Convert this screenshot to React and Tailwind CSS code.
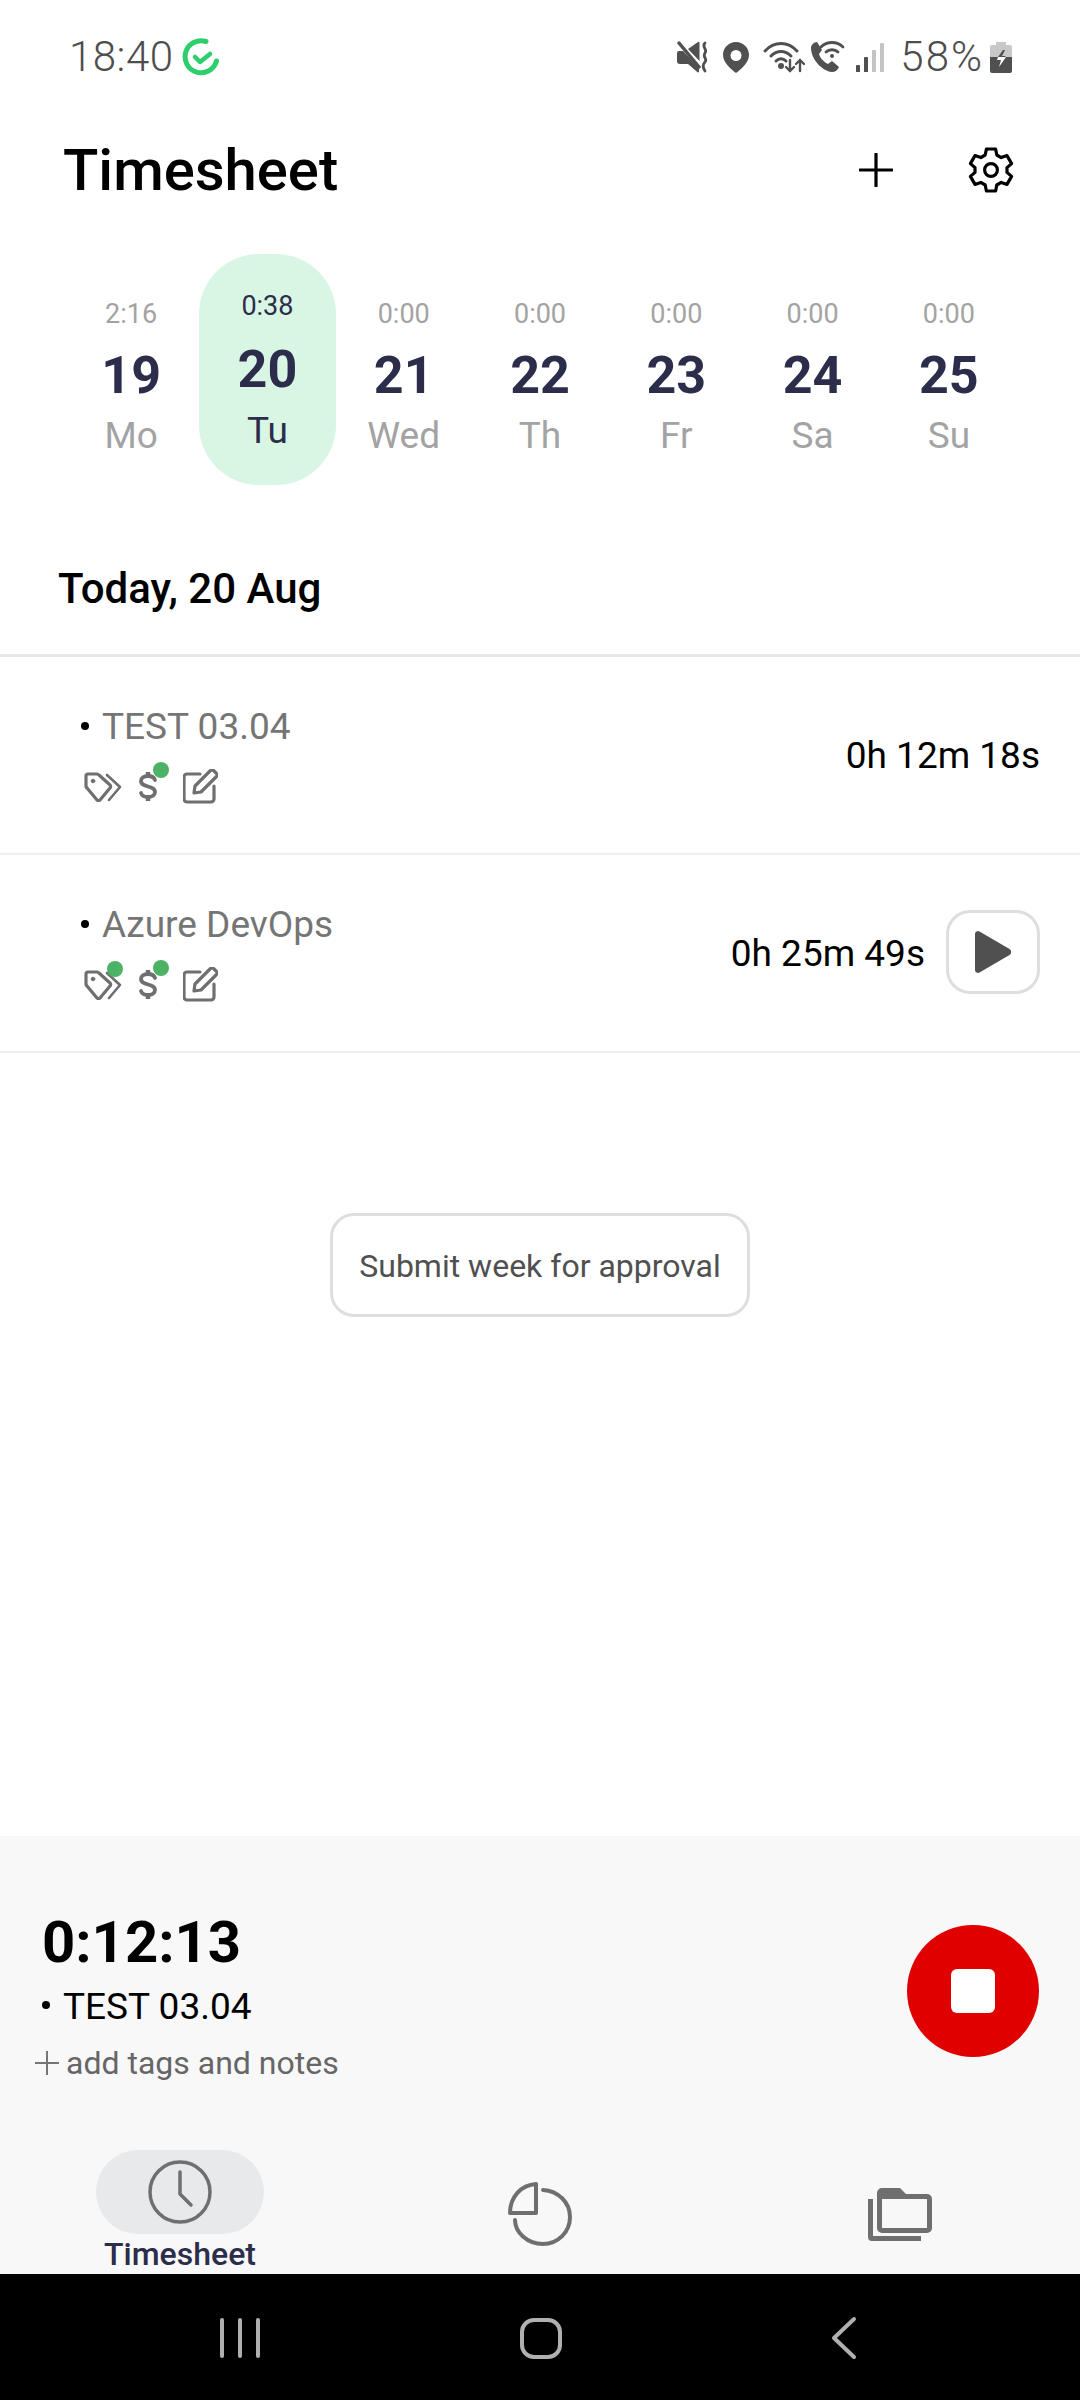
const DAYS = [
  { time: '2:16', num: '19', label: 'Mo' },
  { time: '0:38', num: '20', label: 'Tu', active: true },
  { time: '0:00', num: '21', label: 'Wed' },
  { time: '0:00', num: '22', label: 'Th' },
  { time: '0:00', num: '23', label: 'Fr' },
  { time: '0:00', num: '24', label: 'Sa' },
  { time: '0:00', num: '25', label: 'Su' },
]

function StatusIcons() {
  return (
    <div className="flex items-center">
      {/* mute */}
      <svg width="32" height="32" viewBox="0 0 32 32" className="mr-[14px]">
        <path fill="#505050" d="M0 12a2 2 0 0 1 2-2h4l16 17v3a1 1 0 0 1-2 .700L11 23H3a3 3 0 0 1-3-3z" />
        <path fill="#505050" d="M11 8l10-7a1 1 0 0 1 1.500 1v18z" />
        <path d="M2 2l20 24" stroke="#505050" strokeWidth="3.500" strokeLinecap="round" />
        <path d="M28 2c-4 4 3 6 0 10s3 6 0 9-2 6 0 9" fill="none" stroke="#505050" strokeWidth="2.800" strokeLinecap="round" />
      </svg>
      {/* location */}
      <svg width="26" height="31" viewBox="0 0 26 31" className="mr-[14px]">
        <path fillRule="evenodd" fill="#505050" d="M13 0c7 0 13 5.500 13 13 0 7-7 13.500-13 18C7 26.500 0 20 0 13 0 5.500 6 0 13 0zm0 8a5.500 5.500 0 1 0 0 11 5.500 5.500 0 0 0 0-11z" />
      </svg>
      {/* wifi with arrows */}
      <svg width="44" height="32" viewBox="0 0 44 32" className="mr-[3px]" fill="none" stroke="#505050" strokeWidth="3" strokeLinecap="round">
        <path d="M2 10C11 0 25 0 34 10" />
        <path d="M8 15c6-6 14-6 20 0" />
        <path d="M13 20c3-3 7-3 10 0" />
        <circle cx="18" cy="25" r="1.500" fill="#505050" />
        <path d="M27 19v11M23 26l4 4 4-4M37 30V19M33 23l4-4 4 4" strokeWidth="2.400" />
      </svg>
      {/* wifi call */}
      <svg width="35" height="32" viewBox="0 0 35 32" className="mr-[11px]">
        <path fill="#505050" d="M7 1l5 8-3 4c1 4 5 8 9 10l4-3 7 6c-1 3-4 5-7 5C12 30 1 18 1 7c0-3 3-6 6-6z" />
        <path d="M11 6c6-6 16-6 22 0M16 11c3-3 9-3 12 0" fill="none" stroke="#505050" strokeWidth="2.800" strokeLinecap="round" />
        <circle cx="22" cy="15" r="2" fill="#505050" />
      </svg>
      {/* signal */}
      <div className="flex items-end gap-[4px] h-[30px] mr-[16px]">
        <div className="w-[4px] h-[7px] bg-[#505050] rounded-t-[1px]" />
        <div className="w-[4px] h-[15px] bg-[#505050] rounded-t-[1px]" />
        <div className="w-[4px] h-[22px] bg-[#c4c4c4] rounded-t-[1px]" />
        <div className="w-[4px] h-[29px] bg-[#c4c4c4] rounded-t-[1px]" />
      </div>
      <span className="text-[42px] leading-none font-light text-[#4d4d4d] tracking-[2px]">58%</span>
      {/* battery */}
      <svg width="22" height="31" viewBox="0 0 22 31" className="ml-[6px]">
        <path fill="#c8c8c8" d="M6 0h10v3h4a2 2 0 0 1 2 2v10H0V5a2 2 0 0 1 2-2h4z" />
        <path fill="#505050" d="M0 15h22v14a2 2 0 0 1-2 2H2a2 2 0 0 1-2-2z" />
        <path fill="#505050" d="M13 8l-5 7h7l1-1h-4l3-6z" />
        <path fill="#fff" d="M8 15l-1 3h4l-2 7 7-10z" />
      </svg>
    </div>
  )
}

function TagIcon() {
  return (
    <svg width="38" height="30" viewBox="0 0 38 30" fill="none" stroke="#6f6f6f" strokeWidth="3.200" strokeLinejoin="round" strokeLinecap="round">
      <path d="M2 4a2 2 0 0 1 2-2h9a3 3 0 0 1 2 1l11 10a2 2 0 0 1 0 3l-10 12a2 2 0 0 1-3 0L3 16a3 3 0 0 1-1-2z" />
      <circle cx="9" cy="9" r="1.800" fill="#6f6f6f" strokeWidth="1" />
      <path d="M23 3l13 12-11 13" strokeWidth="2.600" />
    </svg>
  )
}

function DollarIcon() {
  return (
    <svg width="20" height="33" viewBox="0 0 20 33" fill="none" stroke="#6f6f6f" strokeWidth="3.800" strokeLinecap="round">
      <path d="M17 10c-1-3-4-4-7-4-4 0-7 2-7 5 0 7 14 4 14 11 0 3-3 5-7 5-3 0-6-1-7-4" />
      <path d="M10 2v4M10 27v4" strokeLinecap="butt" strokeWidth="4.500" />
    </svg>
  )
}

function EditIcon() {
  return (
    <svg width="35" height="35" viewBox="0 0 35 35" fill="none" stroke="#6f6f6f" strokeWidth="3.200" strokeLinecap="round" strokeLinejoin="round">
      <path d="M17 5H4a3 3 0 0 0-3 3v22a3 3 0 0 0 3 3h24a3 3 0 0 0 3-3V17" />
      <path d="M11 24l1-7L27 2a2.500 2.500 0 0 1 4 0l2 2a2.500 2.500 0 0 1 0 4L18 23z" />
    </svg>
  )
}

function GreenDot({ className }) {
  return <span className={`absolute w-[16px] h-[16px] rounded-full bg-[#4cb266] ${className}`} />
}

function EntryRow({ name, duration, tagDot, play }) {
  return (
    <div className="h-[198px] border-b-2 border-[#f0f0f0] flex items-center justify-between pl-[81px] pr-[40px]">
      <div className="pb-[1px]">
        <div className="flex items-center h-[44px]">
          <span className="w-[8px] h-[8px] rounded-full bg-black mr-[13px] mb-[2px]" />
          <span className="text-[37px] leading-none text-[#757575]">{name}</span>
        </div>
        <div className="flex items-center mt-[20px] h-[36px] pl-[3px]">
          <div className="relative">
            <TagIcon />
            {tagDot && <GreenDot className="right-[-1px] top-[-9px]" />}
          </div>
          <div className="relative ml-[16px]">
            <DollarIcon />
            <GreenDot className="left-[15px] top-[-8px]" />
          </div>
          <div className="ml-[25px]">
            <EditIcon />
          </div>
        </div>
      </div>
      <div className="flex items-center">
        <span className="text-[37px] leading-none text-black mt-[1px]">{duration}</span>
        {play && (
          <div className="ml-[21px] w-[94px] h-[84px] -mt-[2px] border-[3px] border-[#dedede] rounded-[24px] flex items-center justify-center">
            <svg width="38" height="44" viewBox="0 0 38 44" fill="#505050">
              <path d="M1 4a3 3 0 0 1 4.500-2.600l30 17.500a3.500 3.500 0 0 1 0 6L5.500 42.600A3 3 0 0 1 1 40z" />
            </svg>
          </div>
        )}
      </div>
    </div>
  )
}

export default function App() {
  return (
    <div className="w-[1080px] h-[2400px] bg-white flex flex-col overflow-hidden font-['Roboto',sans-serif]">
      {/* Status bar */}
      <div className="h-[114px] shrink-0 flex items-center justify-between pl-[69px] pr-[68px]">
        <div className="flex items-center">
          <span className="text-[42px] leading-none font-light text-[#4d4d4d] tracking-[0.5px]">18:40</span>
          <svg width="38" height="38" viewBox="0 0 38 38" className="ml-[8px]" fill="none" stroke="#2dce6c" strokeLinecap="round" strokeLinejoin="round">
            <path d="M24 3.500A16 16 0 1 0 34.500 23" strokeWidth="5" />
            <path d="M13 19l5 5 10-8" strokeWidth="4.500" />
          </svg>
        </div>
        <StatusIcons />
      </div>

      {/* Header */}
      <div className="h-[112px] shrink-0 flex items-center justify-between pl-[63px] pr-[65px]">
        <h1 className="text-[58px] leading-none font-medium text-black">Timesheet</h1>
        <div className="flex items-center">
          <svg width="34" height="34" viewBox="0 0 34 34" stroke="#000" strokeWidth="3.200" strokeLinecap="round">
            <path d="M17 1v32M1 17h32" />
          </svg>
          <svg width="48" height="50" viewBox="0 0 24 24" className="ml-[74px]" fill="none" stroke="#000" strokeWidth="1.600" strokeLinecap="round" strokeLinejoin="round">
            <path d="M9.700 1.500h4.600l.6 3 2.200 1.300 2.900-1 2.300 4-2.300 2v2.400l2.300 2-2.300 4-2.900-1-2.200 1.300-.6 3H9.700l-.6-3-2.200-1.300-2.900 1-2.300-4 2.300-2v-2.400l-2.300-2 2.300-4 2.900 1 2.200-1.300z" />
            <circle cx="12" cy="12" r="3.200" />
          </svg>
        </div>
      </div>

      {/* Week strip */}
      <div className="mt-[28px] h-[231px] shrink-0 grid grid-cols-7 ml-[63px] w-[954px]">
        {DAYS.map(day => (
          <div
            key={day.num}
            className={
              day.active
                ? 'flex flex-col items-center pt-[38px] bg-[#d9f6e4] rounded-[60px]'
                : 'flex flex-col items-center pt-[46px]'
            }
          >
            <span className={day.active ? 'text-[27px] leading-[28px] text-[#2b2d4a]' : 'text-[27px] leading-[28px] text-[#a3a3a3]'}>{day.time}</span>
            <span className={day.active ? 'mt-[22px] text-[52px] leading-[56px] font-bold text-[#2b2d4a]' : 'mt-[20px] text-[52px] leading-[56px] font-bold text-[#2b2d4a]'}>{day.num}</span>
            <span className={day.active ? 'mt-[13px] text-[37px] leading-[40px] text-[#2b2d4a]' : 'mt-[12px] text-[37px] leading-[40px] text-[#a3a3a3]'}>{day.label}</span>
          </div>
        ))}
      </div>

      {/* Date heading */}
      <div className="h-[169px] shrink-0 border-b-[3px] border-[#e8e8e8] box-content flex items-center pl-[58px]">
        <span className="text-[42px] leading-none font-medium text-black mt-[39px]">Today, 20 Aug</span>
      </div>

      <EntryRow name="TEST 03.04" duration="0h 12m 18s" />
      <EntryRow name="Azure DevOps" duration="0h 25m 49s" tagDot play />

      {/* Submit */}
      <div className="flex-1 flex justify-center items-start pt-[160px]">
        <button className="w-[420px] h-[104px] border-[3px] border-[#dedede] rounded-[24px] text-[32px] pt-[2px] text-[#505050]">
          Submit week for approval
        </button>
      </div>

      {/* Running timer */}
      <div className="h-[314px] shrink-0 bg-[#f8f8f8] flex justify-between pl-[35px] pr-[41px]">
        <div className="pt-[76px]">
          <div className="pl-[7px] text-[58px] leading-[60px] font-bold text-black">0:12:13</div>
          <div className="flex items-center mt-[12px] h-[44px] pl-[7px]">
            <span className="w-[8px] h-[8px] rounded-full bg-black mr-[13px] mb-[2px]" />
            <span className="text-[37px] leading-none text-black">TEST 03.04</span>
          </div>
          <div className="flex items-center mt-[15px] h-[40px]">
            <svg width="24" height="24" viewBox="0 0 24 24" stroke="#757575" strokeWidth="2">
              <path d="M12 0v24M0 12h24" />
            </svg>
            <span className="ml-[7px] text-[32px] leading-none text-[#666666]">add tags and notes</span>
          </div>
        </div>
        <div className="mt-[89px] w-[132px] h-[132px] rounded-full bg-[#e00000] flex items-center justify-center">
          <div className="w-[44px] h-[44px] bg-white rounded-[6px]" />
        </div>
      </div>

      {/* Tab bar */}
      <div className="h-[124px] shrink-0 bg-[#f8f8f8] grid grid-cols-3">
        <div className="flex flex-col items-center">
          <div className="w-[168px] h-[84px] rounded-full bg-[#e8e9eb] flex items-center justify-center">
            <svg width="64" height="64" viewBox="0 0 64 64" fill="none" stroke="#6f6f6f" strokeWidth="3.500" strokeLinecap="round" strokeLinejoin="round">
              <circle cx="32" cy="32" r="30" />
              <path d="M32 12v22l11 11" />
            </svg>
          </div>
          <span className="mt-[4px] text-[32px] leading-[32px] font-medium text-[#2b2d4a]">Timesheet</span>
        </div>
        <div className="flex justify-center pt-[32px]">
          <svg width="64" height="64" viewBox="0 0 64 64" fill="none" stroke="#6f6f6f" strokeWidth="4" strokeLinecap="round" strokeLinejoin="round">
            <path d="M28 2v29H2C2 15 13 3 28 2z" />
            <path d="M35 8c15 1 27 12 27 27 0 15-12 27-27 27C19 62 7 50 7 38" />
          </svg>
        </div>
        <div className="flex justify-center pt-[37px]">
          <svg width="64" height="54" viewBox="0 0 64 54" fill="#6f6f6f">
            <path fillRule="evenodd" d="M14 1h18l6 6h21a5 5 0 0 1 5 5v29a5 5 0 0 1-5 5H14a5 5 0 0 1-5-5V6a5 5 0 0 1 5-5zm0 11v29h45V12z" />
            <path d="M0 12h5v37h48v5H4a4 4 0 0 1-4-4z" />
          </svg>
        </div>
      </div>

      {/* Android nav */}
      <div className="h-[126px] shrink-0 bg-black flex items-start pt-[44px] pl-[220px]">
        <div className="flex gap-[14px]">
          <span className="w-[4px] h-[40px] rounded-full bg-[#b0b0b0]" />
          <span className="w-[4px] h-[40px] rounded-full bg-[#b0b0b0]" />
          <span className="w-[4px] h-[40px] rounded-full bg-[#b0b0b0]" />
        </div>
        <span className="ml-[260px] w-[42px] h-[41px] rounded-[14px] border-[4px] border-[#b0b0b0]" />
        <svg width="26" height="44" viewBox="0 0 26 44" className="ml-[269px] -mt-[2px]" fill="none" stroke="#b0b0b0" strokeWidth="4" strokeLinecap="round" strokeLinejoin="round">
          <path d="M23 3L3 22l20 19" />
        </svg>
      </div>
    </div>
  )
}
